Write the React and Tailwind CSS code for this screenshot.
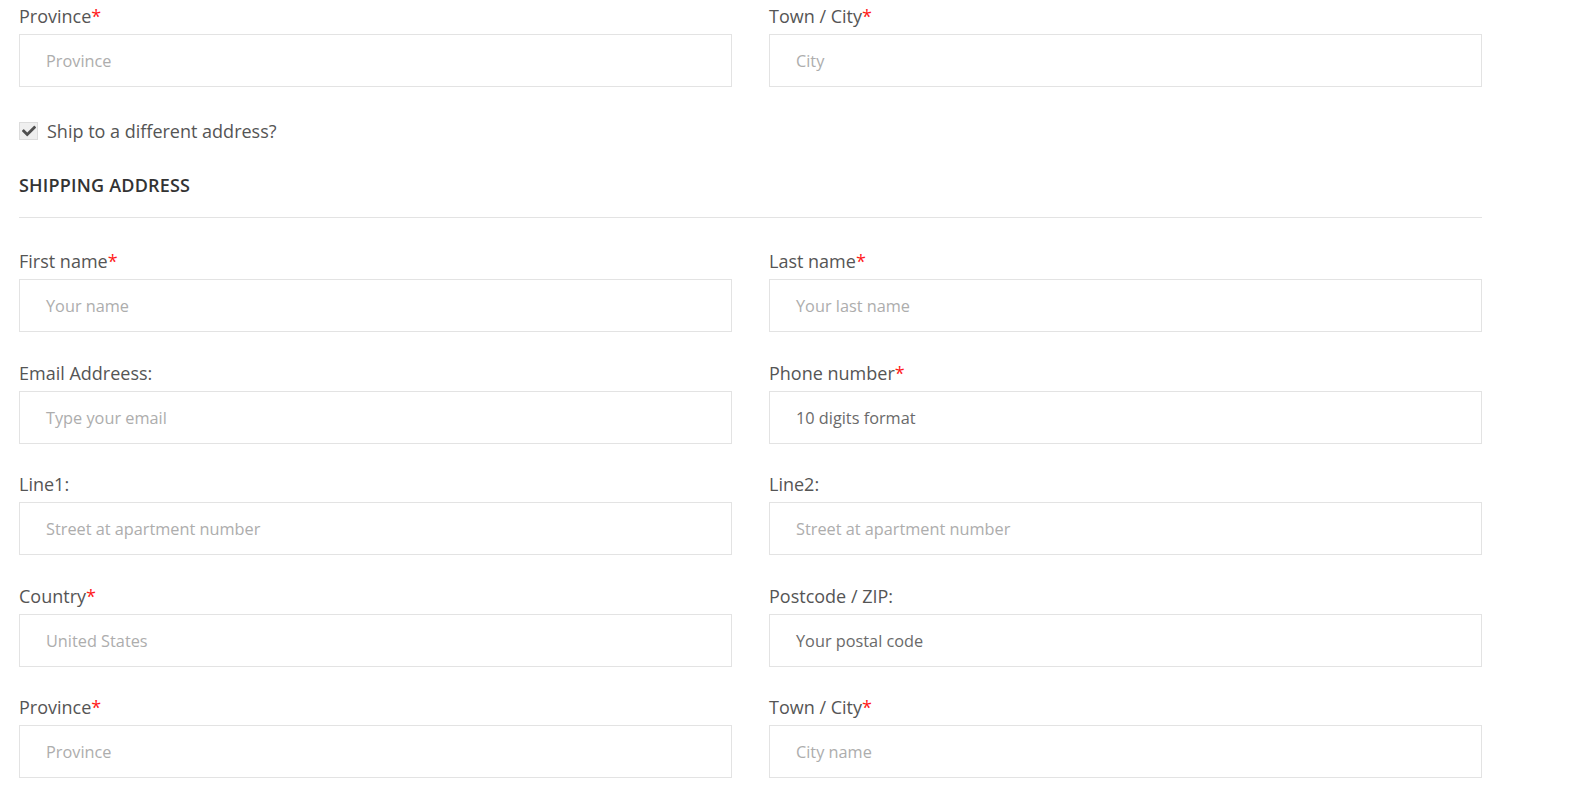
import React from "react";
import { FaCheck } from "react-icons/fa";

const font = { fontFamily: '"Open Sans", "Noto Sans", sans-serif' };

function Field({ label, required, placeholder, value }) {
  return (
    <div className="flex flex-col">
      <label className="text-[18px] leading-[25px] pt-[1px] text-[#555] mb-[5px]">
        {label}
        {required && <span className="text-[#ff1a1a]">*</span>}
      </label>
      <div className="h-[53px] border border-[#e3e3e3] bg-white flex items-center pl-[26px] pt-[2px] text-[16.3px]">
        {value ? (
          <span className="text-[#6a6a6a]">{value}</span>
        ) : (
          <span className="text-[#adadad]">{placeholder}</span>
        )}
      </div>
    </div>
  );
}

export default function App() {
  const rows = [
    [
      { label: "First name", required: true, placeholder: "Your name" },
      { label: "Last name", required: true, placeholder: "Your last name" },
    ],
    [
      { label: "Email Addreess:", placeholder: "Type your email" },
      { label: "Phone number", required: true, value: "10 digits format" },
    ],
    [
      { label: "Line1:", placeholder: "Street at apartment number" },
      { label: "Line2:", placeholder: "Street at apartment number" },
    ],
    [
      { label: "Country", required: true, placeholder: "United States" },
      { label: "Postcode / ZIP:", value: "Your postal code" },
    ],
    [
      { label: "Province", required: true, placeholder: "Province" },
      { label: "Town / City", required: true, placeholder: "City name" },
    ],
  ];
  return (
    <div className="min-h-screen bg-white" style={font}>
      <div className="w-[1463px] ml-[19px] pt-[3px]">
        <div className="grid grid-cols-2 gap-x-[37px]">
          <Field label="Province" required placeholder="Province" />
          <Field label="Town / City" required placeholder="City" />
        </div>
        <div className="flex items-center mt-[35px] h-[18px]">
          <span className="w-[19px] h-[18px] bg-[#efefef] border border-[#dcdcdc] flex items-center justify-center">
            <FaCheck className="text-[#505050] w-[14px] h-[14px]" />
          </span>
          <span className="ml-[9px] text-[18px] text-[#555]">Ship to a different address?</span>
        </div>
        <h3 className="mt-[33px] text-[18px] leading-[25px] font-semibold text-[#333] tracking-[0.2px]">
          SHIPPING ADDRESS
        </h3>
        <div className="mt-[19px] border-t border-[#e3e3e3]" />
        <div className="mt-[30px] grid grid-cols-2 gap-x-[37px] gap-y-[27.5px]">
          {rows.flat().map((f, i) => (
            <Field key={i} {...f} />
          ))}
        </div>
      </div>
    </div>
  );
}
